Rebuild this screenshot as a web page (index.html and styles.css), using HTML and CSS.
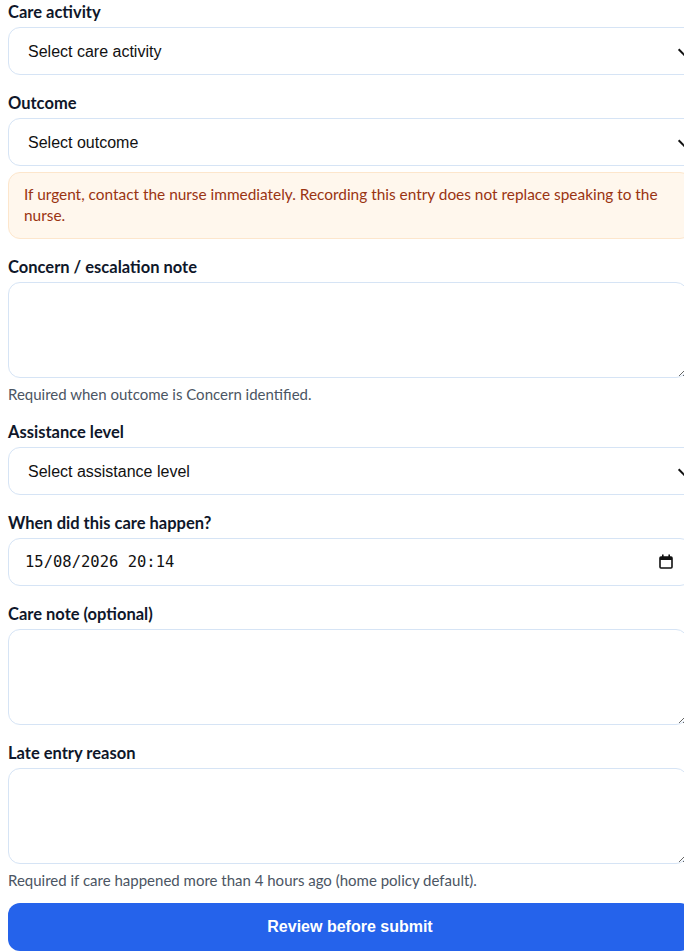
FILE: index.html
```html
<!DOCTYPE html>
<html lang="en-GB">
<head>
    <meta charset="UTF-8">
    <meta name="viewport" content="width=device-width, initial-scale=1.0">
    <title>Record care</title>
    <link rel="stylesheet" href="styles.css">
</head>
<body>
    <form class="care-form" id="careForm">
        <div class="form-group">
            <label for="activity">Care activity</label>
            <div class="select-field">
                <select id="activity" required>
                    <option value="">Select care activity</option>
                    <option value="personal">Personal care</option>
                    <option value="meal">Meal</option>
                    <option value="fluids">Fluids</option>
                    <option value="repositioning">Repositioning</option>
                </select>
            </div>
        </div>

        <div class="form-group">
            <label for="outcome">Outcome</label>
            <div class="select-field">
                <select id="outcome" required>
                    <option value="">Select outcome</option>
                    <option value="completed">Completed</option>
                    <option value="declined">Declined</option>
                    <option value="concern">Concern identified</option>
                </select>
            </div>
            <div class="notice">
                If urgent, contact the nurse immediately. Recording this entry does not replace speaking to the nurse.
            </div>
        </div>

        <div class="form-group">
            <label for="concern">Concern / escalation note</label>
            <textarea id="concern" rows="4"></textarea>
            <p class="hint">Required when outcome is Concern identified.</p>
        </div>

        <div class="form-group">
            <label for="assistance">Assistance level</label>
            <div class="select-field">
                <select id="assistance" required>
                    <option value="">Select assistance level</option>
                    <option value="independent">Independent</option>
                    <option value="one">Assistance of one</option>
                    <option value="two">Assistance of two</option>
                </select>
            </div>
        </div>

        <div class="form-group">
            <label for="happenedAt">When did this care happen?</label>
            <div class="date-field">
                <input type="text" id="happenedAt" class="date-input" value="15/08/2026 20:14">
                <svg class="date-icon" width="14" height="15" viewBox="0 0 14 15" aria-hidden="true">
                    <rect x="1" y="3" width="12" height="11" rx="1" fill="none" stroke="#111" stroke-width="1.6"/>
                    <rect x="1" y="3" width="12" height="3" fill="#111"/>
                    <rect x="3" y="0.5" width="1.6" height="3" fill="#111"/>
                    <rect x="9.4" y="0.5" width="1.6" height="3" fill="#111"/>
                </svg>
            </div>
        </div>

        <div class="form-group">
            <label for="note">Care note (optional)</label>
            <textarea id="note" rows="4"></textarea>
        </div>

        <div class="form-group">
            <label for="lateReason">Late entry reason</label>
            <textarea id="lateReason" rows="4"></textarea>
            <p class="hint">Required if care happened more than 4 hours ago (home policy default).</p>
        </div>

        <button type="submit" class="btn">Review before submit</button>
    </form>

    <script>
        document.getElementById('careForm').addEventListener('submit', function(e) {
            e.preventDefault();
        });
    </script>
</body>
</html>
```

FILE: styles.css
```css
* {
    margin: 0;
    padding: 0;
    box-sizing: border-box;
}

html, body {
    overflow: hidden;
}

body {
    font-family: Lato, 'Noto Sans', sans-serif;
    color: #0f172a;
    background: white;
    padding: 1px 8px 0;
}

.care-form {
    width: 684px;
    display: flex;
    flex-direction: column;
}

.form-group {
    display: flex;
    flex-direction: column;
    margin-bottom: 17px;
}

label {
    display: block;
    font-size: 16.5px;
    font-weight: 700;
    line-height: 22px;
    margin-bottom: 4px;
    color: #0f172a;
}

select, input, textarea {
    font-family: 'Liberation Sans', Arial, sans-serif;
    font-size: 16px;
    color: #111;
    background: white;
    border: 1px solid #d6e4f5;
    border-radius: 12px;
    padding: 0 16px;
}

/* wrapper draws the dropdown chevron */
.select-field {
    position: relative;
    width: calc(100% + 8px);
}

.select-field::after {
    content: '';
    position: absolute;
    left: 672px;
    top: 18px;
    width: 8px;
    height: 8px;
    border-right: 2px solid #111;
    border-bottom: 2px solid #111;
    transform: rotate(45deg);
    pointer-events: none;
}

select {
    -webkit-appearance: none;
    appearance: none;
    width: 100%;
    height: 48px;
    padding-left: 19px;
}

.date-field {
    position: relative;
}

.date-input {
    width: 100%;
    height: 48px;
    font-family: 'DejaVu Sans Mono', 'Liberation Mono', monospace;
    font-size: 15.5px;
}

.date-icon {
    position: absolute;
    right: 19px;
    top: 16px;
    pointer-events: none;
}

textarea {
    width: calc(100% - 4px);
    height: 96px;
    padding: 12px 16px;
    resize: vertical;
}

select:focus, input:focus, textarea:focus {
    outline: none;
    border-color: #2563eb;
}

.notice {
    margin-top: 6px;
    padding: 11px 15px 12px;
    background: #fff7ed;
    border: 1px solid #fde6cc;
    border-radius: 12px;
    color: #9a3412;
    font-size: 15.4px;
    line-height: 21px;
}

.hint {
    margin-top: 6px;
    font-size: 15px;
    line-height: 20px;
    color: #4b5563;
}

.btn {
    margin-top: -4px;
    height: 48px;
    width: 100%;
    background: #2563eb;
    color: white;
    border: none;
    border-radius: 12px;
    font-family: 'Liberation Sans', Arial, sans-serif;
    font-size: 16px;
    font-weight: 700;
    cursor: pointer;
}

.btn:hover {
    background: #1d4ed8;
}
```
